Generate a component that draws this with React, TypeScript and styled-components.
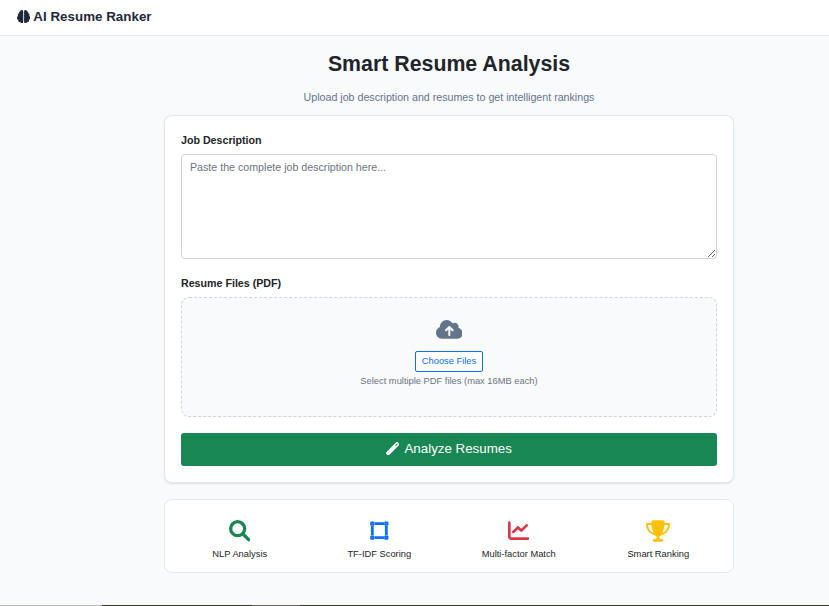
import React from "react";
import styled, { createGlobalStyle } from "styled-components";
import { FaBrain, FaChartLine, FaCloudArrowUp, FaTrophy } from "react-icons/fa6";

const GlobalStyle = createGlobalStyle`
  *, *::before, *::after { box-sizing: border-box; }
  html, body { margin: 0; height: 100%; overflow: hidden; }
  body {
    background: #f8fafc;
    color: #212529;
    font-family: "Liberation Sans", Arial, sans-serif;
    font-size: 10.67px;
    line-height: 16px;
  }
`;

const Page = styled.div`
  display: flex;
  flex-direction: column;
  height: 606px;
`;

const Navbar = styled.nav`
  display: flex;
  align-items: center;
  gap: 3px;
  height: 36px;
  padding: 0 17px 2px;
  background: #fff;
  border-bottom: 1px solid #e2e8f0;
  color: #1e293b;
  font-size: 13.33px;
  font-weight: 700;
`;

const Brand = styled.span`
  letter-spacing: 0.03px;
  white-space: nowrap;
`;

const Main = styled.main`
  width: 570px;
  margin: 0 0 0 164px;
  flex: 1;
`;

const Header = styled.header`
  height: 79px;
  padding-top: 15px;
  text-align: center;
  white-space: nowrap;
`;

const Title = styled.h1`
  margin: 0;
  font-size: 21.33px;
  line-height: 26px;
`;

const Subtitle = styled.p`
  margin: 12px 0 0;
  color: #64748b;
`;

const Card = styled.section`
  background: #fff;
  border: 1px solid #e2e8f0;
  border-radius: 8px;
`;

const FormCard = styled(Card)`
  display: flex;
  flex-direction: column;
  height: 368px;
  padding: 16px;
  box-shadow: 0 1px 2px rgba(0, 0, 0, 0.1);
`;

const Label = styled.label`
  height: 22px;
  font-weight: 700;
`;

const Description = styled.textarea`
  display: block;
  width: 100%;
  height: 105px;
  margin: 0 0 16px;
  padding: 4px 8px;
  border: 1px solid #ced4da;
  border-radius: 4px;
  font: inherit;
  line-height: 16px;
  resize: vertical;
  outline: none;
  &::placeholder { color: #6c757d; opacity: 1; }
`;

const DropZone = styled.div`
  display: flex;
  flex-direction: column;
  align-items: center;
  height: 120px;
  margin-bottom: 16px;
  padding-top: 18px;
  background: #f8fafc;
  border: 1px dashed #cbd5e1;
  border-radius: 8px;
  color: #64748b;
`;

const ChooseButton = styled.button`
  width: 68px;
  height: 21px;
  margin-top: 8px;
  padding: 0 0 1px;
  background: #fff;
  border: 1px solid #0d6efd;
  border-radius: 2px;
  color: #0d6efd;
  font: 9.33px/14px "Liberation Sans", Arial, sans-serif;
  white-space: nowrap;
`;

const Hint = styled.small`
  margin-top: 2px;
  color: #6c757d;
  font-size: 9.33px;
  line-height: 14px;
`;

const SubmitButton = styled.button`
  display: flex;
  align-items: center;
  justify-content: center;
  gap: 5px;
  width: 100%;
  height: 33px;
  padding: 0 0 2px;
  border: 0;
  border-radius: 3px;
  background: #198754;
  color: #fff;
  font: 13.33px/20px "Liberation Sans", Arial, sans-serif;
`;

const FeatureCard = styled(Card)`
  display: grid;
  grid-template-columns: repeat(4, 1fr);
  height: 74px;
  margin-top: 16px;
  padding: 19px 5px 0;
`;

const Feature = styled.div`
  display: flex;
  flex-direction: column;
  align-items: center;
  gap: 4px;
`;

const FeatureIcon = styled.span<{ $color: string }>`
  display: flex;
  align-items: center;
  justify-content: center;
  height: 24px;
  color: ${({ $color }) => $color};
`;

const FeatureName = styled.span`
  font-size: 9.33px;
  line-height: 14px;
  color: #212529;
`;

const BottomEdge = styled.footer`
  height: 1px;
  background: linear-gradient(
    to right,
    #b9bcb9 0 102px,
    #3b3524 102px 252px,
    #68685a 252px 300px,
    #3b3524 300px
  );
`;

const SearchIcon = () => (
  <svg width="21.33" height="21.33" viewBox="0 0 512 512" fill="none" stroke="currentColor" strokeWidth="80">
    <circle cx="208" cy="208" r="168" />
    <path d="M330 330L472 472" strokeLinecap="round" />
  </svg>
);

const VectorIcon = () => (
  <svg width="18.67" height="21.33" viewBox="0 0 448 512" fill="none" stroke="currentColor">
    <path d="M112 88H336M112 424H336M56 144V368M392 144V368" strokeWidth="68" />
    <path
      d="M28 60h56v56H28zM364 60h56v56h-56zM28 396h56v56H28zM364 396h56v56h-56z"
      strokeWidth="46"
      strokeLinejoin="round"
    />
  </svg>
);

const WandIcon = () => (
  <svg width="13.33" height="13.33" viewBox="0 0 512 512" fill="currentColor">
    <path
      fillRule="evenodd"
      d="M14 390L390 14c19-19 49-19 68 0l40 40c19 19 19 49 0 68L122 498c-19 19-49 19-68 0l-40-40c-19-19-19-49 0-68zM358 128l26 26 66-66-26-26z"
    />
  </svg>
);

const features = [
  { name: "NLP Analysis", color: "#198754", icon: <SearchIcon /> },
  { name: "TF-IDF Scoring", color: "#0d6efd", icon: <VectorIcon /> },
  { name: "Multi-factor Match", color: "#dc3545", icon: <FaChartLine size={21.33} /> },
  { name: "Smart Ranking", color: "#ffc107", icon: <FaTrophy size={24} /> },
];

export default function App() {
  return (
    <Page>
      <GlobalStyle />
      <Navbar>
        <FaBrain size={13.33} />
        <Brand>AI Resume Ranker</Brand>
      </Navbar>
      <Main>
        <Header>
          <Title>Smart Resume Analysis</Title>
          <Subtitle>Upload job description and resumes to get intelligent rankings</Subtitle>
        </Header>
        <FormCard>
          <Label htmlFor="description">Job Description</Label>
          <Description id="description" placeholder="Paste the complete job description here..." />
          <Label>Resume Files (PDF)</Label>
          <DropZone>
            <FaCloudArrowUp size={26.67} />
            <ChooseButton type="button">Choose Files</ChooseButton>
            <Hint>Select multiple PDF files (max 16MB each)</Hint>
          </DropZone>
          <SubmitButton type="button">
            <WandIcon />
            Analyze Resumes
          </SubmitButton>
        </FormCard>
        <FeatureCard>
          {features.map(({ name, color, icon }) => (
            <Feature key={name}>
              <FeatureIcon $color={color}>{icon}</FeatureIcon>
              <FeatureName>{name}</FeatureName>
            </Feature>
          ))}
        </FeatureCard>
      </Main>
      <BottomEdge />
    </Page>
  );
}
